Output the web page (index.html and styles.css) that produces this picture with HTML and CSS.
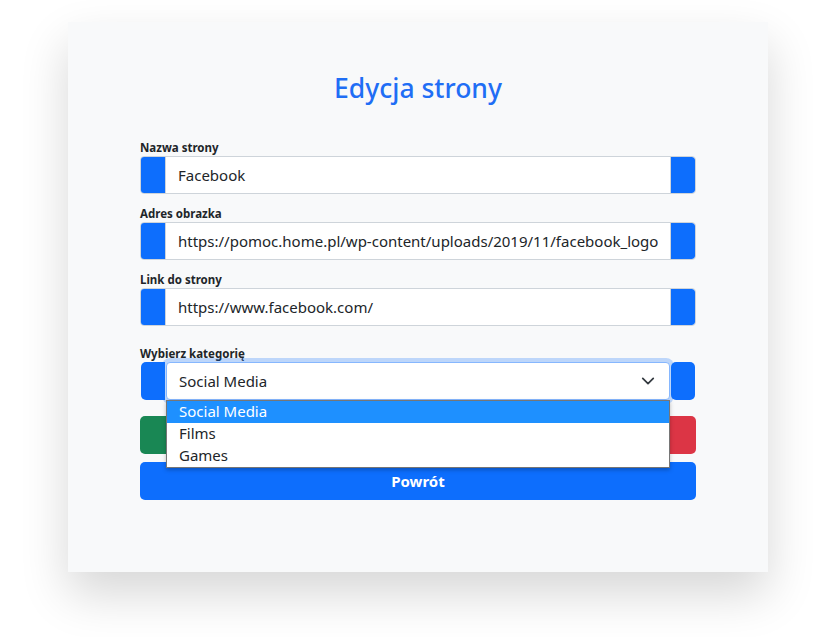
FILE: index.html
```html
<!DOCTYPE html>
<html lang="pl">
<head>
<meta charset="utf-8">
<title>Edycja strony</title>
<link rel="stylesheet" href="styles.css">
</head>
<body>
<div class="card">
  <h1 class="title">Edycja strony</h1>
  <form class="form">
    <label class="label">Nazwa strony</label>
    <div class="group">
      <span class="addon addon-left"></span>
      <div class="control"><span class="value">Facebook</span></div>
      <span class="addon addon-right"></span>
    </div>
    <label class="label">Adres obrazka</label>
    <div class="group">
      <span class="addon addon-left"></span>
      <div class="control"><span class="value">https://pomoc.home.pl/wp-content/uploads/2019/11/facebook_logo.png</span></div>
      <span class="addon addon-right"></span>
    </div>
    <label class="label">Link do strony</label>
    <div class="group group-last">
      <span class="addon addon-left"></span>
      <div class="control"><span class="value">https://www.facebook.com/</span></div>
      <span class="addon addon-right"></span>
    </div>
    <label class="label label-select">Wybierz kategorię</label>
    <div class="sgroup">
      <span class="saddon saddon-left"></span>
      <div class="select-wrap">
        <div class="select">
          <span>Social Media</span>
          <svg class="chev" width="14" height="14" viewBox="0 0 16 16"><path d="M2 5l6 6 6-6" fill="none" stroke="#343a40" stroke-width="2" stroke-linecap="round" stroke-linejoin="round"/></svg>
        </div>
        <ul class="dropdown">
          <li class="opt opt-active">Social Media</li>
          <li class="opt">Films</li>
          <li class="opt">Games</li>
        </ul>
      </div>
      <span class="saddon saddon-right"></span>
    </div>
    <div class="actions">
      <button type="button" class="btn btn-green">Zapisz</button>
      <button type="button" class="btn btn-red">Usuń</button>
    </div>
    <button type="button" class="btn btn-blue">Powrót</button>
  </form>
</div>
</body>
</html>
```
FILE: styles.css
```css
* { box-sizing: border-box; }
html, body { margin: 0; padding: 0; background: #ffffff; }
body {
  font-family: "Noto Sans", "Open Sans", "DejaVu Sans", sans-serif;
  color: #212529;
  width: 830px;
  height: 637px;
  overflow: hidden;
}
.card {
  margin: 22px 0 0 68px;
  width: 700px;
  height: 550px;
  background: #f8f9fa;
  box-shadow: 0 22px 45px rgba(0, 0, 0, 0.16);
  padding-top: 48px;
}
.title {
  margin: 0;
  text-align: center;
  font-size: 26.5px;
  line-height: 36px;
  font-weight: 500;
  color: #1f6ef5;
}
.form {
  margin: 34px 0 0 72px;
  width: 556px;
  display: flex;
  flex-direction: column;
}
.label {
  font-size: 11.5px;
  font-weight: 700;
  line-height: 16px;
  height: 16px;
  color: #212529;
}
.label-select { margin-top: 20px; }
.group {
  display: flex;
  height: 38px;
  border: 1px solid #ced4da;
  border-radius: 4px;
  margin-bottom: 12px;
  overflow: hidden;
  background: #fff;
}
.group-last { margin-bottom: 0; }
.addon {
  width: 24px;
  background: #0d6efd;
  flex: none;
}
.addon-left { border-radius: 0; }
.addon-right { border-radius: 0 3px 3px 0; }
.control {
  flex: 1;
  min-width: 0;
  padding: 0 12px;
  font-size: 15px;
  line-height: 36px;
  border-left: 1px solid #ced4da;
  border-right: 1px solid #ced4da;
}
.value {
  display: block;
  white-space: nowrap;
  overflow: hidden;
}
.sgroup {
  display: flex;
  height: 38px;
  gap: 1px;
  padding: 0 1px;
}
.saddon {
  width: 24px;
  background: #0d6efd;
  flex: none;
}
.saddon-left { border-radius: 5px 0 0 5px; }
.saddon-right { border-radius: 5px; }
.select-wrap {
  flex: 1;
  position: relative;
}
.select {
  height: 38px;
  background: #fff;
  border: 1px solid #86b7fe;
  border-radius: 4px;
  box-shadow: 0 0 0 4px rgba(13, 110, 253, 0.25);
  display: flex;
  align-items: center;
  justify-content: space-between;
  padding: 0 14px 0 12px;
  font-size: 15px;
  position: relative;
  z-index: 1;
}
.chev { display: block; }
.dropdown {
  position: absolute;
  z-index: 2;
  top: 38px;
  left: 0;
  right: 0;
  margin: 0;
  padding: 0;
  list-style: none;
  background: #fff;
  border: 1px solid #767676;
  box-shadow: 0 2px 4px rgba(0, 0, 0, 0.25);
}
.opt {
  height: 22px;
  line-height: 21px;
  padding: 0 12px;
  font-size: 15px;
  color: #212529;
}
.opt-active { background: #1e90ff; color: #fff; }
.actions {
  margin-top: 16px;
  display: grid;
  grid-template-columns: 1fr 1fr;
  gap: 8px;
}
.btn {
  height: 38px;
  border: none;
  border-radius: 5px;
  font-family: inherit;
  font-size: 15px;
  font-weight: 700;
  color: #fff;
}
.btn-green { background: #198754; }
.btn-red { background: #dc3545; }
.btn-blue { background: #0d6efd; margin-top: 8px; width: 100%; }
```
